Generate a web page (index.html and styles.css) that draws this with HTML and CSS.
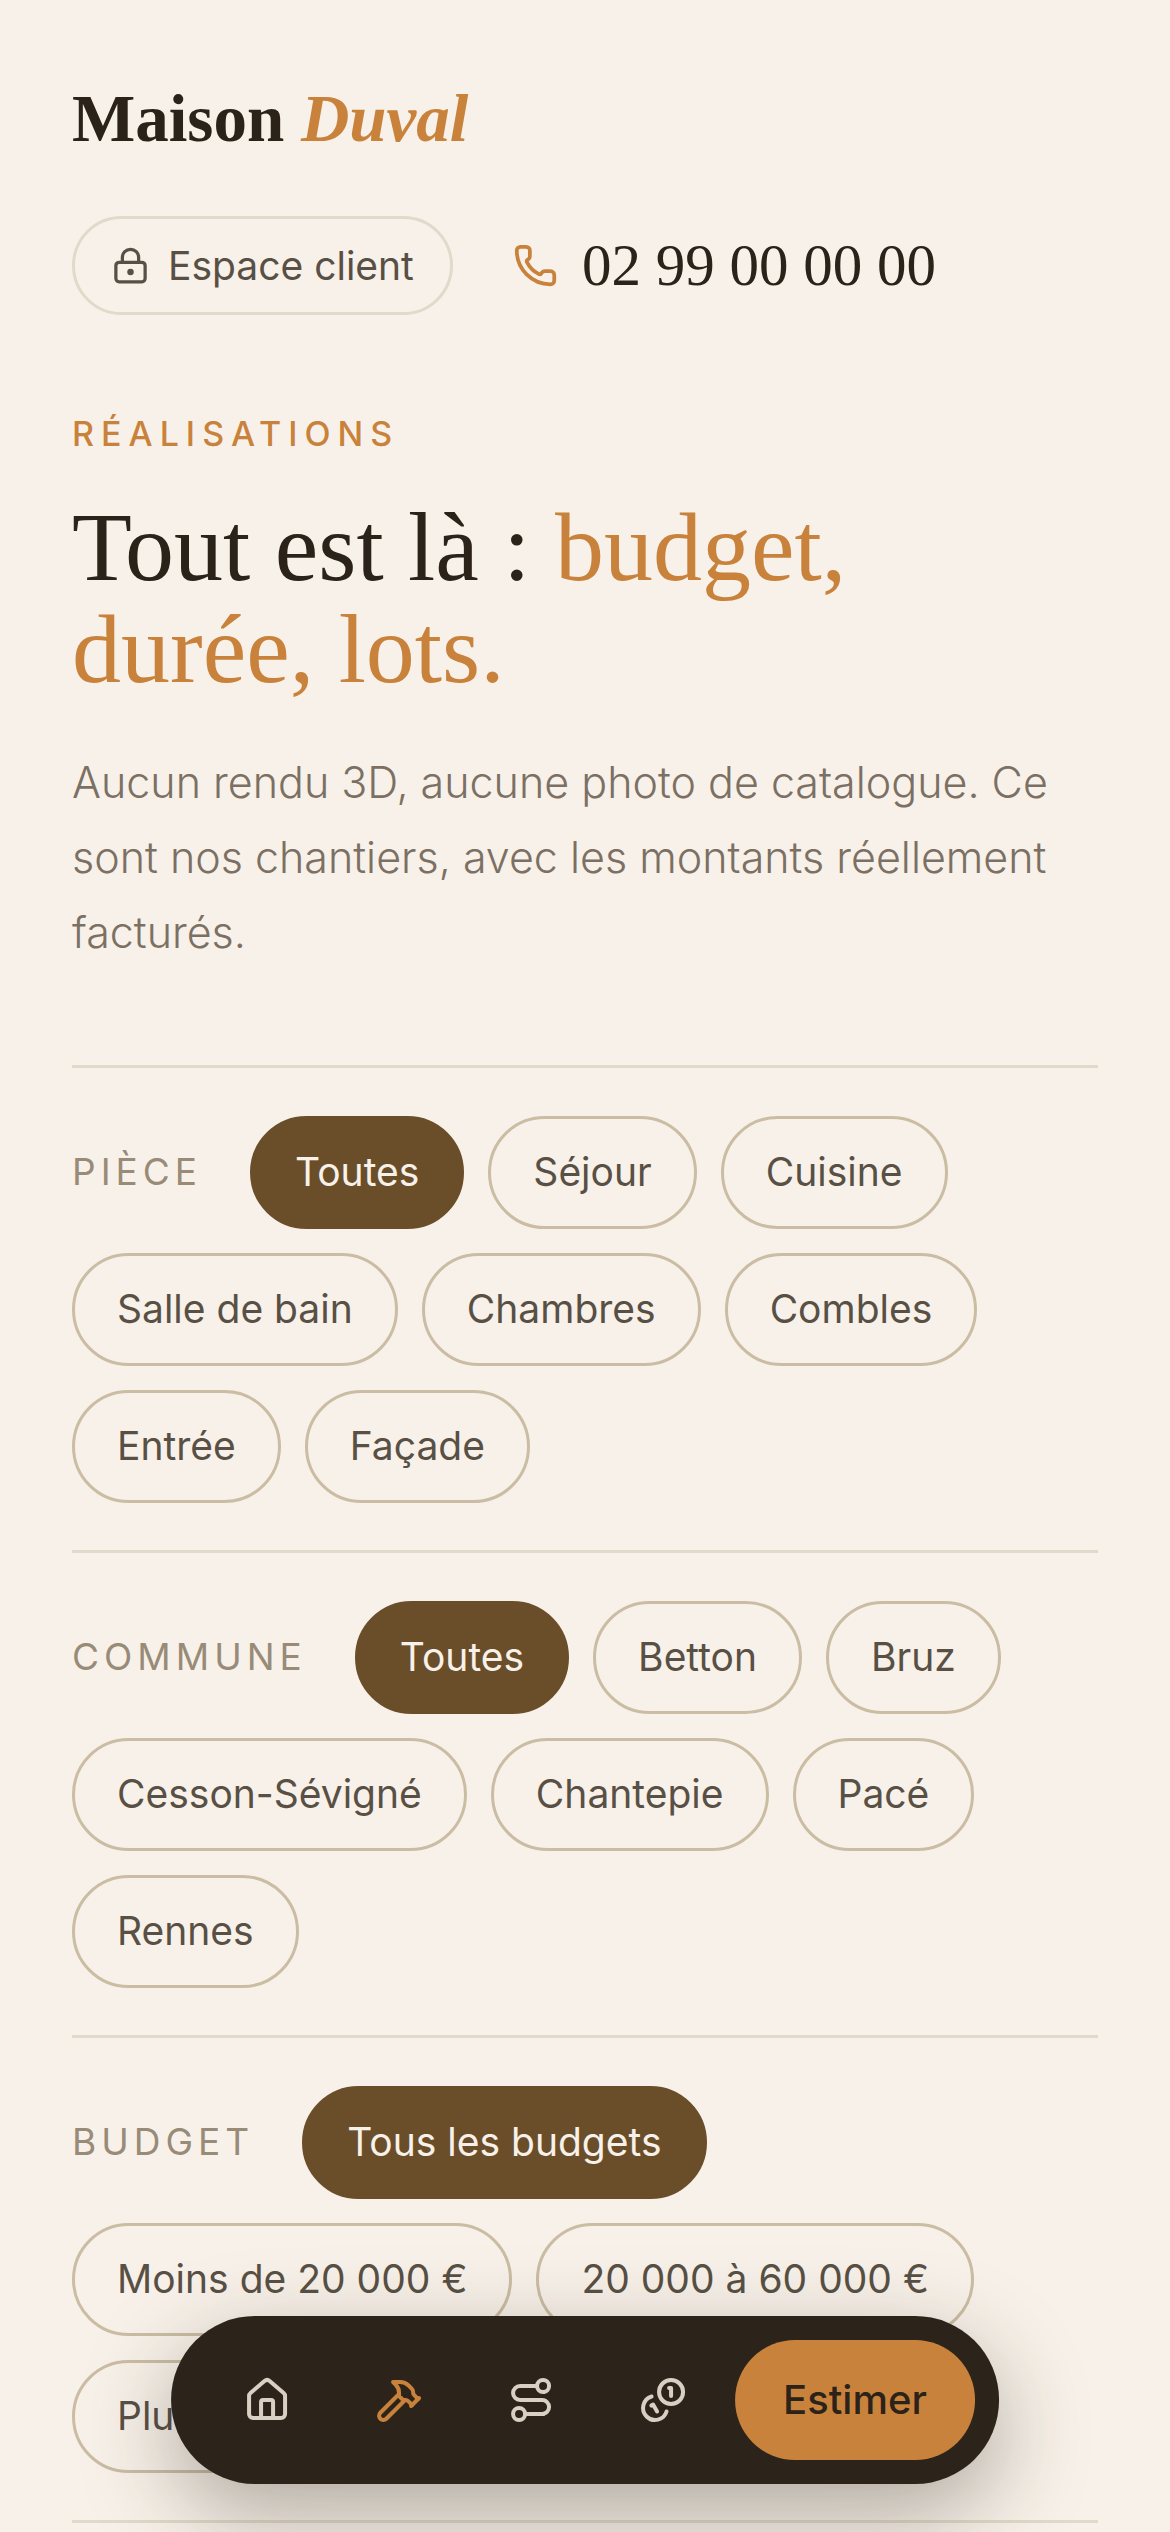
FILE: index.html
```
<!DOCTYPE html>
<html lang="fr">
<head>
    <meta charset="UTF-8">
    <meta name="viewport" content="width=device-width, initial-scale=1.0">
    <title>Réalisations - Maison Duval</title>
    <link rel="stylesheet" href="styles.css">
</head>
<body>
    <header class="header">
        <a class="logo" href="#">Maison <em>Duval</em></a>
        <div class="header-links">
            <a class="client-link" href="#">
                <svg class="icon icon-lock" viewBox="0 0 24 24" aria-hidden="true">
                    <circle cx="12" cy="16" r="1"/>
                    <rect x="3" y="10" width="18" height="12" rx="2"/>
                    <path d="M7 10V7a5 5 0 0 1 10 0v3"/>
                </svg>
                Espace client
            </a>
            <a class="phone-link" href="tel:+33299000000">
                <svg class="icon icon-phone" viewBox="0 0 24 24" aria-hidden="true">
                    <path d="M13.832 16.568a1 1 0 0 0 1.213-.303l.355-.465A2 2 0 0 1 17 15h3a2 2 0 0 1 2 2v3a2 2 0 0 1-2 2A18 18 0 0 1 2 4a2 2 0 0 1 2-2h3a2 2 0 0 1 2 2v3a2 2 0 0 1-.8 1.6l-.468.351a1 1 0 0 0-.292 1.233 14 14 0 0 0 6.392 6.384"/>
                </svg>
                02 99 00 00 00
            </a>
        </div>
    </header>

    <main>
        <section class="intro">
            <p class="eyebrow">Réalisations</p>
            <h1>Tout est là : <span class="accent">budget, durée, lots.</span></h1>
            <p class="lead">Aucun rendu 3D, aucune photo de catalogue. Ce sont nos chantiers, avec les montants réellement facturés.</p>
        </section>

        <section class="filters">
            <div class="filter-group" role="group" aria-labelledby="label-piece">
                <span class="filter-label" id="label-piece">Pièce</span>
                <button type="button" class="chip active" aria-pressed="true">Toutes</button>
                <button type="button" class="chip">Séjour</button>
                <button type="button" class="chip">Cuisine</button>
                <button type="button" class="chip">Salle de bain</button>
                <button type="button" class="chip">Chambres</button>
                <button type="button" class="chip">Combles</button>
                <button type="button" class="chip">Entrée</button>
                <button type="button" class="chip">Façade</button>
            </div>
            <div class="filter-group" role="group" aria-labelledby="label-commune">
                <span class="filter-label" id="label-commune">Commune</span>
                <button type="button" class="chip active" aria-pressed="true">Toutes</button>
                <button type="button" class="chip">Betton</button>
                <button type="button" class="chip">Bruz</button>
                <button type="button" class="chip">Cesson-Sévigné</button>
                <button type="button" class="chip">Chantepie</button>
                <button type="button" class="chip">Pacé</button>
                <button type="button" class="chip">Rennes</button>
            </div>
            <div class="filter-group" role="group" aria-labelledby="label-budget">
                <span class="filter-label" id="label-budget">Budget</span>
                <button type="button" class="chip active" aria-pressed="true">Tous les budgets</button>
                <button type="button" class="chip">Moins de 20 000 €</button>
                <button type="button" class="chip">20 000 à 60 000 €</button>
                <button type="button" class="chip">Plus de 60 000 €</button>
            </div>
        </section>
    </main>

    <nav class="dock" aria-label="Navigation">
        <a class="dock-link" href="#" aria-label="Accueil">
            <svg class="icon" viewBox="0 0 24 24" aria-hidden="true">
                <path d="M15 21v-8a1 1 0 0 0-1-1h-4a1 1 0 0 0-1 1v8"/>
                <path d="M3 10a2 2 0 0 1 .709-1.528l7-5.999a2 2 0 0 1 2.582 0l7 5.999A2 2 0 0 1 21 10v9a2 2 0 0 1-2 2H5a2 2 0 0 1-2-2z"/>
            </svg>
        </a>
        <a class="dock-link current" href="#" aria-label="Réalisations" aria-current="page">
            <svg class="icon" viewBox="0 0 24 24" aria-hidden="true">
                <path d="m15 12-9.373 9.373a1 1 0 0 1-3.001-3L12 9"/>
                <path d="m18 15 4-4"/>
                <path d="m21.5 11.5-1.914-1.914A2 2 0 0 1 19 8.172v-.344a2 2 0 0 0-.586-1.414l-1.657-1.657A6 6 0 0 0 12.516 3H9l1.243 1.243A6 6 0 0 1 12 8.485V10l2 2h1.172a2 2 0 0 1 1.414.586L18.5 14.5"/>
            </svg>
        </a>
        <a class="dock-link" href="#" aria-label="Méthode">
            <svg class="icon" viewBox="0 0 24 24" aria-hidden="true">
                <circle cx="6" cy="19" r="3"/>
                <path d="M9 19h8.5a3.5 3.5 0 0 0 0-7h-11a3.5 3.5 0 0 1 0-7H15"/>
                <circle cx="18" cy="5" r="3"/>
            </svg>
        </a>
        <a class="dock-link" href="#" aria-label="Tarifs">
            <svg class="icon" viewBox="0 0 24 24" aria-hidden="true">
                <path d="M13.744 17.736a6 6 0 1 1-7.48-7.48"/>
                <path d="M15 6h1v4"/>
                <path d="m6.134 14.768.866-.5 2 3.464"/>
                <circle cx="16" cy="8" r="6"/>
            </svg>
        </a>
        <a class="dock-cta" href="#">Estimer</a>
    </nav>
</body>
</html>
```
FILE: styles.css
```
:root {
    --bg: #f8f1e9;
    --ink: #2b231a;
    --text: #585045;
    --muted: #7b7063;
    --label: #988b78;
    --accent: #c9823b;
    --brown: #6a4e2a;
    --line: #e1d9c9;
    --chip-line: #cbbda3;
    --serif: "Liberation Serif", "Times New Roman", serif;
    --sans: Inter, sans-serif;
}
* {
    box-sizing: border-box;
}
body {
    margin: 0;
    padding: 0 72px;
    background: var(--bg);
    color: var(--text);
    font-family: var(--sans);
    font-size: 39px;
}
a {
    color: inherit;
    text-decoration: none;
}
h1, p {
    margin: 0;
}
.icon {
    width: 48px;
    height: 48px;
    flex: none;
    fill: none;
    stroke: currentColor;
    stroke-width: 2;
    stroke-linecap: round;
    stroke-linejoin: round;
}

/* header */
.header {
    padding-top: 78px;
}
.logo {
    display: block;
    font-family: var(--serif);
    font-size: 67px;
    font-weight: 700;
    line-height: 80px;
    color: var(--ink);
}
.logo em {
    color: var(--accent);
}
.header-links {
    display: flex;
    flex-wrap: wrap;
    align-items: center;
    gap: 60px;
    margin-top: 58px;
}
.client-link {
    display: flex;
    align-items: center;
    gap: 18px;
    height: 99px;
    padding: 0 36px;
    border: 3px solid var(--line);
    border-radius: 50px;
}
.phone-link {
    display: flex;
    align-items: center;
    gap: 24px;
    font-family: var(--serif);
    font-size: 59px;
    color: var(--ink);
}
.icon-lock {
    width: 39px;
    height: 39px;
}
.icon-phone {
    width: 45px;
    height: 45px;
    color: var(--accent);
}

/* intro */
.intro {
    padding: 92px 0 95px;
}
.eyebrow {
    font-size: 34px;
    font-weight: 500;
    line-height: 54px;
    letter-spacing: 7px;
    text-transform: uppercase;
    color: var(--accent);
}
h1 {
    margin: 35px 0 45px;
    font-family: var(--serif);
    font-size: 98px;
    font-weight: 400;
    line-height: 102px;
    color: var(--ink);
    max-width: 860px;
}
.accent {
    color: var(--accent);
}
.lead {
    font-size: 43px;
    font-weight: 300;
    line-height: 75px;
    color: var(--muted);
}

/* filters */
.filters {
    border-bottom: 3px solid var(--line);
}
.filter-group {
    display: flex;
    flex-wrap: wrap;
    align-items: center;
    gap: 24px;
    padding: 48px 0 47px;
    border-top: 3px solid var(--line);
}
.filter-label {
    margin-right: 24px;
    padding-bottom: 2px;
    font-size: 37px;
    letter-spacing: 5px;
    text-transform: uppercase;
    color: var(--label);
}
.chip {
    height: 113px;
    padding: 0 42px 2px;
    border: 3px solid var(--chip-line);
    border-radius: 57px;
    background: none;
    color: var(--text);
    font: inherit;
    cursor: pointer;
}
.chip.active {
    background: var(--brown);
    border-color: var(--brown);
    color: var(--bg);
}

/* floating navigation */
.dock {
    position: fixed;
    left: 50%;
    bottom: 48px;
    transform: translateX(-50%);
    display: flex;
    align-items: center;
    gap: 12px;
    padding: 24px 24px 24px 36px;
    border-radius: 84px;
    background: #2c241b;
    box-shadow: 0 30px 90px rgba(43, 35, 26, 0.35);
}
.dock-link {
    display: flex;
    align-items: center;
    justify-content: center;
    width: 120px;
    height: 120px;
    color: #d9cfc3;
}
.dock-link.current {
    color: var(--accent);
}
.dock-cta {
    padding: 0 48px;
    border-radius: 60px;
    background: var(--accent);
    color: var(--ink);
    font-size: 40px;
    font-weight: 500;
    line-height: 120px;
}
```
